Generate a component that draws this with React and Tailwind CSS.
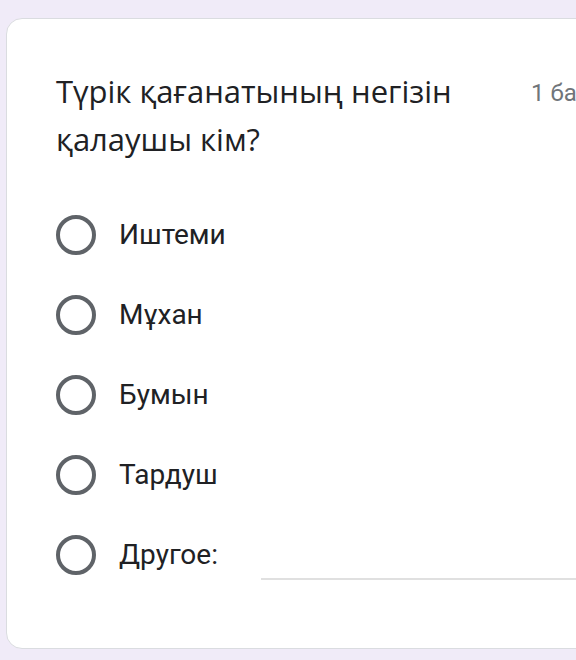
import React from "react";

const options = ["Иштеми", "Мұхан", "Бумын", "Тардуш"];

function Radio() {
  return (
    <div className="w-[40px] h-[40px] rounded-full border-[4.5px] border-[#5f6368] shrink-0" />
  );
}

export default function App() {
  return (
    <div className="w-[576px] h-[660px] overflow-hidden bg-[#f0ebf8] pt-[18px] pl-[6px]" style={{ fontFamily: "Roboto, 'Noto Sans', sans-serif" }}>
      <div className="w-[640px] h-[631px] bg-white border border-[#dadce0] rounded-[16px] pl-[49px] pt-[48px]">
        <div className="flex items-start">
          <div className="w-[420px] text-[31px] leading-[48px] text-[#202124]" style={{ fontFamily: "'Open Sans', Roboto, sans-serif" }}>
            Түрік қағанатының негізін қалаушы кім?
          </div>
          <div className="ml-[55px] mt-[10px] text-[24px] leading-[32px] text-[#70757a] whitespace-nowrap">1 балл</div>
        </div>
        <div className="mt-[32px] flex flex-col">
          {options.map((o) => (
            <div key={o} className="h-[80px] flex items-center">
              <Radio />
              <span className="ml-[23px] text-[28px] text-[#202124]">{o}</span>
            </div>
          ))}
          <div className="h-[80px] flex items-center">
            <Radio />
            <span className="ml-[23px] text-[28px] text-[#202124]">Другое:</span>
            <div className="ml-[43px] flex-1 self-stretch flex items-end pb-[15px]">
              <div className="w-full h-[2px] bg-[#e0e0e0]" />
            </div>
          </div>
        </div>
      </div>
    </div>
  );
}
